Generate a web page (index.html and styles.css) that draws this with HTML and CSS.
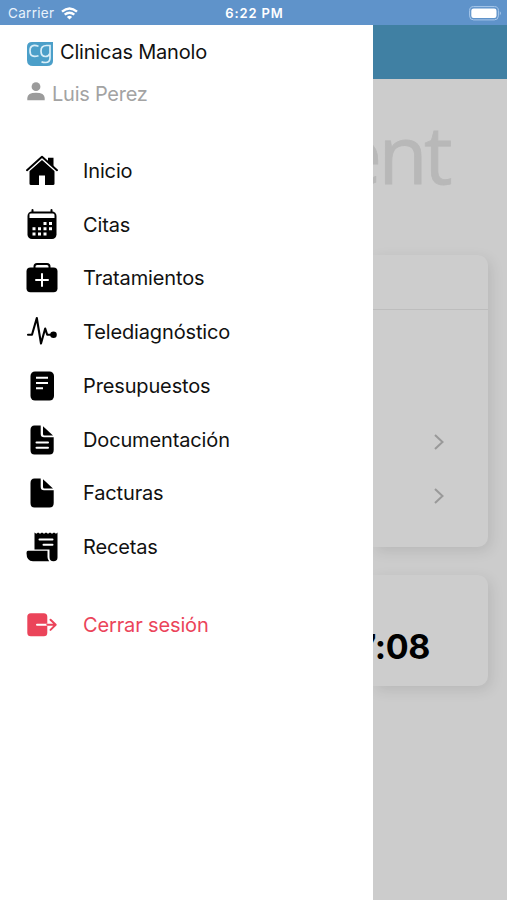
FILE: index.html
```
<!DOCTYPE html>
<html lang="es">
<head>
<meta charset="utf-8">
<title>Clinicas Manolo</title>
<link rel="stylesheet" href="styles.css">
</head>
<body>
<header class="status">
  <div class="carrier"><span>Carrier</span>
    <svg width="17" height="13" viewBox="0 0 17 13" fill="none" stroke="#fff" stroke-width="2.4"><path d="M1 4.700Q8.500-1.700 16 4.700M3.700 7.700Q8.500 3.700 13.300 7.700"/><path d="M5.900 9.900Q8.500 7.800 11.100 9.900L8.500 12.500Z" fill="#fff" stroke="none"/></svg>
  </div>
  <div class="time">6:22 PM</div>
  <svg class="battery" width="33" height="15" viewBox="0 0 33 15"><rect x=".6" y=".6" width="28.800" height="13.300" rx="4" fill="none" stroke="#a9c8ea" stroke-width="1"/><rect x="2.300" y="2.500" width="25.200" height="9.600" rx="2.300" fill="#fff"/><path d="M30.800 5.200Q33 7.200 30.800 9.300Z" fill="#a9c8ea"/></svg>
</header>
<div class="app">
  <nav class="drawer">
    <div class="brand">
      <svg width="26" height="24" viewBox="0 0 26 24"><path d="M5 0H26V19Q26 24 20 24H6Q0 24 0 18V5Q0 0 5 0Z" fill="#4b9fc9"/><g fill="none" stroke="#d9eef8" stroke-width="1.700"><path d="M11.500 4.200Q3 1.500 3 8.700Q3 16.500 11.500 13.700"/><path d="M23 14V3.500H19.500Q14 3.500 14 9Q14 14.500 18.500 14.500Q21.500 14.500 23 11.500M23 13V16Q23 20.500 18.500 20.500Q16 20.500 14.500 19.700"/></g></svg>
      <span>Clinicas Manolo</span>
    </div>
    <div class="user">
      <svg width="18" height="19" viewBox="0 0 18 19" fill="#9b9b9b"><circle cx="9" cy="4.700" r="4.400"/><path d="M.3 18.200V16Q.5 10.800 9 10.800Q17.500 10.800 17.700 16V18.200Z"/></svg>
      <span>Luis Perez</span>
    </div>
    <ul class="menu">
      <li><svg class="icon" viewBox="0 0 32 32"><path d="M3.500 16L16 5L28.500 16V28.700Q28.500 30 27 30H19V20.500H13V30H5Q3.500 30 3.500 28.700Z"/><path d="M1 15.700L16 2L31 15.700" fill="none" stroke="#fff" stroke-width="3.600"/><path d="M1 15.200L16 1.800L31 15.200" fill="none" stroke="#000" stroke-width="2" stroke-linecap="round" stroke-linejoin="round"/><path d="M22 2.800H27.500V11.500L22 7Z"/></svg><span>Inicio</span></li>
      <li><svg class="icon" viewBox="0 0 32 32"><path d="M6.500 1V5M25.500 1V5" stroke="#000" stroke-width="2" stroke-linecap="round"/><rect x="1.500" y="2.500" width="29" height="27.500" rx="4.500"/><path d="M3.500 5Q3.500 4.500 5 4.500H27Q28.500 4.500 28.500 6V9H3.500Z" fill="#fff"/><path d="M17.500 13h3v3h-3zM23 13h3v3h-3zM6.500 18.200h3v3h-3zM12 18.200h3v3h-3zM17.500 18.200h3v3h-3zM23 18.200h3v3h-3zM6.500 23.500h3v3h-3zM12 23.500h3v3h-3zM17.500 23.500h3v3h-3z" fill="#fff"/></svg><span>Citas</span></li>
      <li><svg class="icon" viewBox="0 0 32 32"><path d="M8.500 6V4.500Q8.500 2 11 2H21Q23.500 2 23.500 4.500V6" fill="none" stroke="#000" stroke-width="2"/><rect x=".5" y="5.500" width="31" height="24.800" rx="4"/><path d="M16 12V24M10 18H22" stroke="#fff" stroke-width="2" stroke-linecap="round"/></svg><span>Tratamientos</span></li>
      <li><svg class="icon" viewBox="0 0 32 32"><path d="M2 18.700H6L10.800 2L15 27.500L19.200 12.500L21.200 18.700H27" fill="none" stroke="#000" stroke-width="2.100" stroke-linecap="round" stroke-linejoin="round"/><circle cx="27.500" cy="18.700" r="3.300"/></svg><span>Telediagnóstico</span></li>
      <li><svg class="icon" viewBox="0 0 32 32"><rect x="4.500" y="1.500" width="23.500" height="29" rx="4.500"/><path d="M10 7.700H22M10 13H22M10 18.300H17" stroke="#fff" stroke-width="2"/></svg><span>Presupuestos</span></li>
      <li><svg class="icon" viewBox="0 0 32 32"><path d="M8.500 1.500H14.700V10Q14.700 13.300 18 13.300H27.700V26Q27.700 30.500 23.500 30.500H8.500Q4.500 30.500 4.500 26V6Q4.500 1.500 8.500 1.500Z"/><path d="M17 2.200L27 11.500H18.500Q17 11.500 17 10Z"/><path d="M10.500 18.500H22M10.500 23.800H22" stroke="#fff" stroke-width="2" stroke-linecap="round"/></svg><span>Documentación</span></li>
      <li><svg class="icon" viewBox="0 0 32 32"><path d="M8.500 1.500H14.700V10Q14.700 13.300 18 13.300H27.700V26Q27.700 30.500 23.500 30.500H8.500Q4.500 30.500 4.500 26V6Q4.500 1.500 8.500 1.500Z"/><path d="M17 2.200L27 11.500H18.500Q17 11.500 17 10Z"/></svg><span>Facturas</span></li>
      <li><svg class="icon" viewBox="0 0 32 32"><path d="M8.500 1.500L10.300 2.700L12.100 1.500L14 2.700L16 1.500L18 2.700L20 1.500L22 2.700L24 1.500L26 2.700L28 1.500L30 2.700L31.500 1.500V26.500Q31.500 30.300 27.500 30.300Q23.500 30.300 23.500 26V18.500H8.500Z"/><path d="M2 19.700H21.500V26Q21.500 28.700 23.200 30.300H7Q.5 30 .5 22Q.5 19.700 2 19.700Z"/><path d="M13.500 8.500H26.500M17.500 13.700H26.500" stroke="#fff" stroke-width="2" stroke-linecap="round"/></svg><span>Recetas</span></li>
    </ul>
    <div class="logout">
      <svg class="icon" viewBox="0 0 32 32"><rect x="1.300" y="4.300" width="20" height="23" rx="3.500" fill="#eb445a"/><path d="M11 15.800H21.300" stroke="#fff" stroke-width="2" stroke-linecap="round"/><path d="M21.300 15.800H29.500M24.500 10.700L29.700 15.800L24.500 20.900" fill="none" stroke="#eb445a" stroke-width="2" stroke-linecap="round" stroke-linejoin="round"/></svg>
      <span>Cerrar sesión</span>
    </div>
  </nav>
  <main class="page">
    <div class="toolbar"></div>
    <div class="title">ent</div>
    <section class="card card-list">
      <div class="card-head"></div>
      <div class="rows">
        <svg class="chevron" viewBox="0 0 12 18"><path d="M2 2L9.500 9L2 16"/></svg>
        <svg class="chevron" viewBox="0 0 12 18"><path d="M2 2L9.500 9L2 16"/></svg>
      </div>
    </section>
    <section class="card card-time">7:08</section>
  </main>
</div>
</body>
</html>
```
FILE: styles.css
```
* { box-sizing: border-box; }
body {
  margin: 0;
  width: 507px;
  height: 900px;
  overflow: hidden;
  background: #fff;
  font-family: Inter, "Liberation Sans", sans-serif;
  color: #111;
}
svg { display: block; flex: none; }
.status {
  display: grid;
  grid-template-columns: 1fr auto 1fr;
  align-items: center;
  height: 25px;
  padding: 1px 5px 0 8px;
  background: #5f93ca;
  color: #fff;
  font-size: 13.5px;
}
.carrier { display: flex; align-items: center; gap: 7px; color: #e8f2fc; letter-spacing: .3px; }
.time { font-weight: 600; font-size: 13px; letter-spacing: .85px; margin-right: 1px; }
.battery { justify-self: end; }
.app { display: flex; height: 875px; }
.drawer { flex: none; width: 373px; padding: 12px 26px; }
.brand { display: flex; align-items: center; gap: 7px; height: 30px; padding-left: 1px; font-size: 20px; letter-spacing: -.2px; }
.brand svg { margin-top: 3px; }
.user { display: flex; align-items: center; gap: 7px; height: 30px; margin-top: 12px; padding-left: 1px; color: #a3a3a3; font-size: 20px; letter-spacing: -.25px; }
.user svg { margin-bottom: 5px; }
.menu { list-style: none; margin: 35px 0 0; padding: 0; }
.menu li, .logout { display: flex; align-items: center; gap: 25px; height: 53.75px; font-size: 20px; letter-spacing: -.14px; }
.icon { width: 32px; height: 32px; }
.logout { margin-top: 24px; color: #eb445a; }
.page { flex: 1; min-width: 0; overflow: hidden; background: #ccc; }
.toolbar { height: 54px; background: #4080a3; }
.title {
  display: flex;
  justify-content: flex-end;
  height: 176px;
  padding: 20px 58px 0 0;
  font: 80px/108px "Open Sans", sans-serif;
  letter-spacing: -3.5px;
  -webkit-text-stroke: .8px #b8b8b8;
  color: #b8b8b8;
}
.card { margin-right: 19px; background: #cdcdcd; box-shadow: 3px 4px 14px rgba(0, 0, 0, .1); }
.card-list { height: 292px; border-radius: 0 10px 10px 0; }
.card-head { height: 55px; border-bottom: 1px solid #bdbdbd; }
.rows { display: flex; flex-direction: column; align-items: flex-end; gap: 36px; padding: 123px 43px 0 0; }
.chevron { width: 12px; height: 18px; fill: none; stroke: #999; stroke-width: 2; }
.card-time {
  display: flex;
  justify-content: flex-end;
  height: 111px;
  margin-top: 28px;
  padding: 51px 58px 0 0;
  border-radius: 0 10px 10px 0;
  font-size: 34px;
  font-weight: 700;
  line-height: 42px;
  letter-spacing: -.4px;
  color: #000;
}
```
